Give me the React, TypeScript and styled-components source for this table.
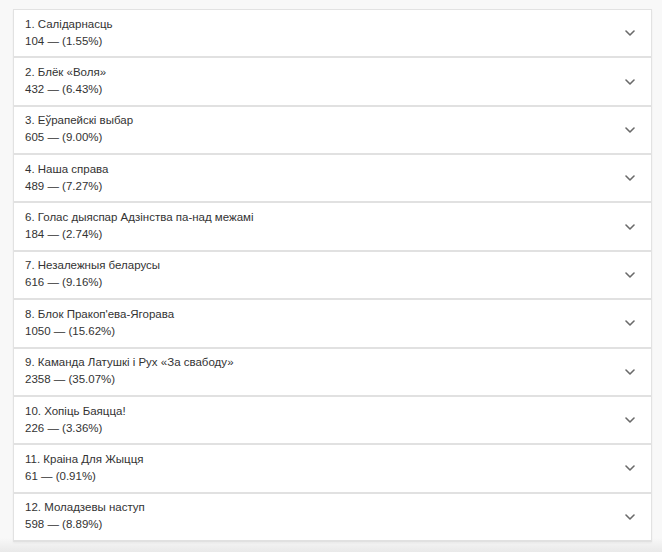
import React from "react";
import styled, { createGlobalStyle } from "styled-components";

const Global = createGlobalStyle`
  html, body { margin: 0; padding: 0; }
  body {
    width: 662px;
    height: 552px;
    overflow: hidden;
    background: linear-gradient(to bottom, #f8f8f8 0px, #f8f8f8 538px, #e9e9e9 552px);
    font-family: "Liberation Sans", Arial, sans-serif;
  }
`;

const Page = styled.div`
  padding: 9px 10px 11px 13px;
  box-sizing: border-box;
  height: 552px;
`;

const List = styled.div`
  display: grid;
  grid-template-rows: repeat(11, 1fr);
  height: 532px;
  background: #fff;
  border: 1px solid #e2e2e2;
  border-bottom: none;
  box-shadow: 0 1px 2px rgba(0, 0, 0, 0.05);
`;

const Row = styled.div`
  display: flex;
  align-items: center;
  justify-content: space-between;
  padding: 0 16px 0 11px;
  border-bottom: 2px solid #e1e1e1;
  background: #fff;
`;

const Text = styled.div`
  display: flex;
  flex-direction: column;
  color: #333;
  font-size: 11.5px;
  line-height: 17px;
  margin-top: -1px;
`;

const Title = styled.span``;
const Count = styled.span``;

const Chevron = styled.svg`
  width: 10px;
  height: 6px;
  flex: none;
`;

const items: [string, string][] = [
  ["1. Салідарнасць", "104 — (1.55%)"],
  ["2. Блёк «Воля»", "432 — (6.43%)"],
  ["3. Еўрапейскі выбар", "605 — (9.00%)"],
  ["4. Наша справа", "489 — (7.27%)"],
  ["6. Голас дыяспар Адзінства па-над межамі", "184 — (2.74%)"],
  ["7. Незалежныя беларусы", "616 — (9.16%)"],
  ["8. Блок Пракоп'ева-Ягорава", "1050 — (15.62%)"],
  ["9. Каманда Латушкі і Рух «За свабоду»", "2358 — (35.07%)"],
  ["10. Хопіць Баяцца!", "226 — (3.36%)"],
  ["11. Краіна Для Жыцця", "61 — (0.91%)"],
  ["12. Моладзевы наступ", "598 — (8.89%)"],
];

export default function App() {
  return (
    <>
      <Global />
      <Page>
        <List>
          {items.map(([t, c]) => (
            <Row key={t}>
              <Text>
                <Title>{t}</Title>
                <Count>{c}</Count>
              </Text>
              <Chevron viewBox="0 0 10 6">
                <path d="M1 1 L5 5 L9 1" fill="none" stroke="#6a6a6a" strokeWidth="1.6" strokeLinecap="round" strokeLinejoin="round" />
              </Chevron>
            </Row>
          ))}
        </List>
      </Page>
    </>
  );
}
